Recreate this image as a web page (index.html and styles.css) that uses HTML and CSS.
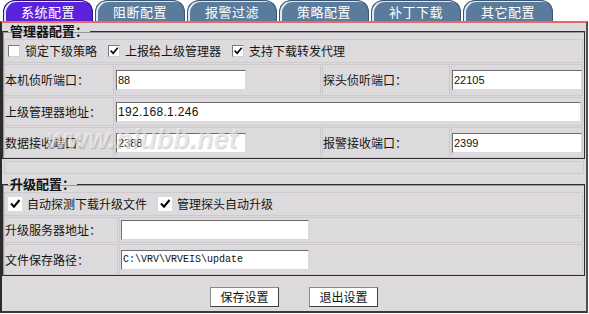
FILE: index.html
```html
<!DOCTYPE html>
<html lang="zh-CN">
<head>
  <meta charset="UTF-8" />
  <title>系统配置</title>
  <link rel="stylesheet" href="styles.css">
</head>
<body>

  <!-- tabs -->
  <div class="tabs">
    <div class="tab active">系统配置</div>
    <div class="tab">阻断配置</div>
    <div class="tab">报警过滤</div>
    <div class="tab">策略配置</div>
    <div class="tab">补丁下载</div>
    <div class="tab">其它配置</div>
  </div>

  <div class="panel">
    <fieldset class="group">
      <legend>管理器配置：</legend>
      <div class="grid grid-main">
        <div class="cell span-all checks">
          <span class="check"><span class="box"></span>锁定下级策略</span>
          <span class="check"><span class="box"><svg viewBox="0 0 12 12"><path d="M2 5.5l3 3.2L10.5 2"/></svg></span>上报给上级管理器</span>
          <span class="check"><span class="box"><svg viewBox="0 0 12 12"><path d="M2 5.5l3 3.2L10.5 2"/></svg></span>支持下载转发代理</span>
        </div>

        <div class="cell lbl">本机侦听端口：</div>
        <div class="cell"><span class="input short">88</span></div>
        <div class="cell lbl">探头侦听端口：</div>
        <div class="cell"><span class="input short">22105</span></div>

        <div class="cell lbl">上级管理器地址：</div>
        <div class="cell span-3"><span class="input wide">192.168.1.246</span></div>

        <div class="cell lbl">数据接收端口：</div>
        <div class="cell"><span class="input short">2388</span></div>
        <div class="cell lbl">报警接收端口：</div>
        <div class="cell"><span class="input short">2399</span></div>
      </div>
    </fieldset>

    <div class="spacer"></div>

    <fieldset class="group">
      <legend>升级配置：</legend>
      <div class="grid grid-update">
        <div class="cell span-all checks">
          <span class="check"><span class="box plain"><svg viewBox="0 0 12 12"><path d="M2 5.5l3 3.2L10.5 2"/></svg></span>自动探测下载升级文件</span>
          <span class="check"><span class="box plain"><svg viewBox="0 0 12 12"><path d="M2 5.5l3 3.2L10.5 2"/></svg></span>管理探头自动升级</span>
        </div>

        <div class="cell lbl">升级服务器地址：</div>
        <div class="cell"><span class="input mid"></span></div>

        <div class="cell lbl">文件保存路径：</div>
        <div class="cell"><span class="input mid mono">C:\VRV\VRVEIS\update</span></div>
      </div>
    </fieldset>

    <div class="actions">
      <button class="btn">保存设置</button>
      <button class="btn">退出设置</button>
    </div>

    <!-- watermark from the source image -->
    <div class="watermark">www.niubb.net</div>
  </div>

</body>
</html>
```

FILE: styles.css
```css
* { margin: 0; padding: 0; box-sizing: border-box; }
html, body {
  width: 589px;
  height: 314px;
  overflow: hidden;
  background: #fff;
  font-family: "Noto Sans CJK SC", "Liberation Sans", sans-serif;
  font-size: 12px;
  line-height: 16px;
  color: #151515;
}

/* tabs */
.tabs {
  display: flex;
  gap: 2px;
  height: 21px;
  padding-left: 3px;
}
.tab {
  width: 90px;
  height: 21px;
  border: 1px solid #3c5671;
  border-bottom: 0;
  border-radius: 12px 12px 0 0;
  background: #5a7b9b;
  box-shadow: inset 2px 1px 0 #dfe7ef;
  color: #fff;
  font-size: 13px;
  line-height: 21px;
  text-align: center;
  letter-spacing: 0.5px;
}
.tab.active {
  background: #5b22dc;
  border-color: #2d1080;
}

/* panel */
.panel {
  position: relative;
  width: 588px;
  height: 292px;
  background: #dcdadc;
  border-top: 2px solid #e26a68;
  border-left: 2px solid #2b2b2b;
  border-right: 2px solid #505050;
  border-bottom: 2px solid #3a3a3a;
}

.group {
  margin: 0 1px 0 0;
  padding: 0 1px;
  border: 1px solid #2e2e2e;
  box-shadow: inset 1px 1px 0 #9a989a;
  min-inline-size: 0;
}
.group legend {
  margin-left: 4px;
  padding: 0 2px;
  font-size: 13px;
  line-height: 16px;
  font-weight: bold;
  color: #111;
}

.grid {
  display: grid;
  gap: 1px;
}
.grid-main {
  grid-template-columns: 110px 206px 128px 1fr;
  grid-template-rows: 24px 32px 29px 31px;
}
.grid-update {
  grid-template-columns: 114px 1fr;
  grid-template-rows: 24px 26px 31px;
}

.cell {
  display: flex;
  align-items: center;
  border: 1px solid #cdc9cd;
}
.span-all { grid-column: 1 / -1; }
.span-3 { grid-column: 2 / 5; }
.lbl { padding-left: 0; }

/* checkboxes */
.checks { padding-left: 3px; }
.check {
  display: flex;
  align-items: center;
  margin-right: 11px;
}
.box {
  width: 12px;
  height: 12px;
  margin-right: 5px;
  background: #fff;
  border: 1px solid #7a7a7a;
  border-right-color: #d0d0d0;
  border-bottom-color: #d0d0d0;
}
.box.plain {
  width: 14px;
  height: 14px;
  border-color: #fff;
}
.box svg {
  display: block;
  width: 100%;
  height: 100%;
}
.box path {
  fill: none;
  stroke: #000;
  stroke-width: 2;
}

/* text inputs */
.input {
  display: block;
  height: 20px;
  padding-left: 1px;
  background: #fff;
  border: 1px solid #6c6c6c;
  border-right-color: #d8d8d8;
  border-bottom-color: #d8d8d8;
  font-family: "Liberation Sans", sans-serif;
  font-size: 11px;
  line-height: 18px;
  color: #111;
}
.input.short { width: 130px; }
.input.wide { width: 465px; font-size: 12px; letter-spacing: 0.3px; }
.input.mid { width: 188px; margin-left: 1px; }
.input.mono {
  font-family: "Liberation Mono", monospace;
  font-size: 10px;
}

.spacer {
  height: 13px;
  margin: 2px 2px 2px 2px;
  border: 1px solid #cdc9cd;
}

/* buttons */
.actions {
  display: flex;
  justify-content: center;
  gap: 30px;
  padding-top: 11px;
}
.btn {
  width: 69px;
  height: 20px;
  background: #fff;
  border: 1px solid #8a8a8a;
  border-right-color: #404040;
  border-bottom-color: #404040;
  font-family: "Noto Sans CJK SC", sans-serif;
  font-size: 12px;
  line-height: 18px;
  color: #111;
}

.watermark {
  position: absolute;
  left: 44px;
  top: 101px;
  font-family: "Liberation Sans", sans-serif;
  font-size: 27px;
  font-weight: bold;
  font-style: italic;
  line-height: 30px;
  color: rgba(255, 255, 255, 0.55);
  text-shadow: 1px 1px 1px rgba(110, 110, 110, 0.35);
  pointer-events: none;
}
```
